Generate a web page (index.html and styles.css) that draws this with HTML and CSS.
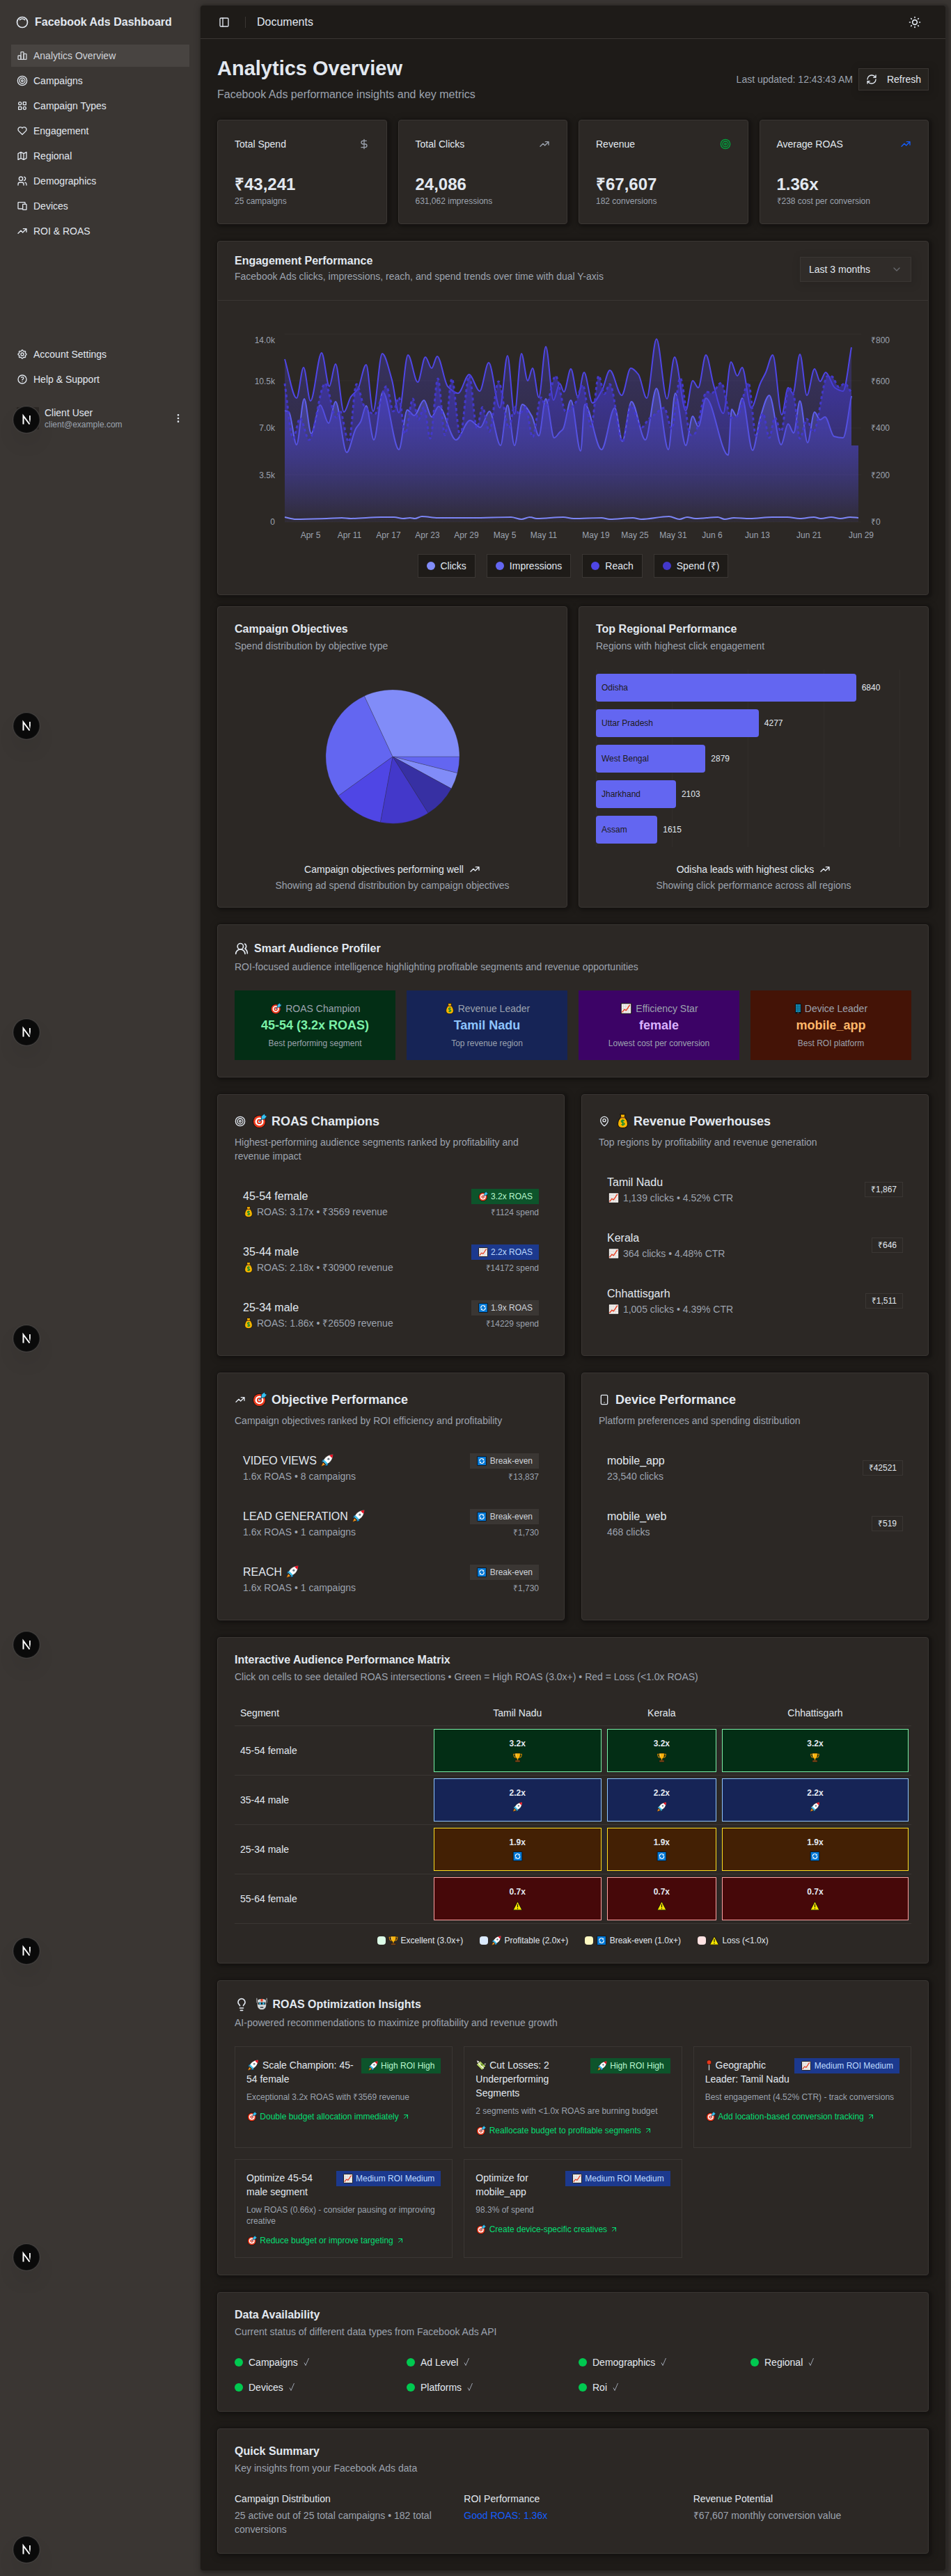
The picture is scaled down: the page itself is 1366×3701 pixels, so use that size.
FILE: index.html
```html
<!DOCTYPE html>
<html lang="en">
<head>
<meta charset="utf-8">
<meta name="viewport" content="width=device-width, initial-scale=1">
<title>Facebook Ads Dashboard</title>
<link rel="stylesheet" href="styles.css">
</head>
<body>
<svg class="sprite" aria-hidden="true">
  <symbol id="i-logo" viewBox="0 0 24 24"><path d="M5.636 5.636a9 9 0 1 0 12.728 12.728a9 9 0 0 0-12.728-12.728z"/><path d="M16.243 7.757a6 6 0 0 0-8.486 0"/></symbol>
  <symbol id="i-bars" viewBox="0 0 24 24"><path d="M3 13a1 1 0 0 1 1-1h4a1 1 0 0 1 1 1v6a1 1 0 0 1-1 1h-4a1 1 0 0 1-1-1z"/><path d="M15 9a1 1 0 0 1 1-1h4a1 1 0 0 1 1 1v10a1 1 0 0 1-1 1h-4a1 1 0 0 1-1-1z"/><path d="M9 5a1 1 0 0 1 1-1h4a1 1 0 0 1 1 1v14a1 1 0 0 1-1 1h-4a1 1 0 0 1-1-1z"/></symbol>
  <symbol id="i-target" viewBox="0 0 24 24"><circle cx="12" cy="12" r="10"/><circle cx="12" cy="12" r="6"/><circle cx="12" cy="12" r="2"/></symbol>
  <symbol id="i-grid" viewBox="0 0 24 24"><circle cx="7" cy="7" r="3"/><path d="M14 4h6v6h-6zM4 14h6v6H4z"/><circle cx="17" cy="17" r="3"/></symbol>
  <symbol id="i-heart" viewBox="0 0 24 24"><path d="M19.5 12.572l-7.5 7.428l-7.5-7.428a5 5 0 1 1 7.5-6.566a5 5 0 1 1 7.5 6.572"/></symbol>
  <symbol id="i-map" viewBox="0 0 24 24"><path d="M3 7l6-3l6 3l6-3v13l-6 3l-6-3l-6 3zM9 4v13M15 7v13"/></symbol>
  <symbol id="i-users" viewBox="0 0 24 24"><circle cx="9" cy="7" r="4"/><path d="M3 21v-2a4 4 0 0 1 4-4h4a4 4 0 0 1 4 4v2M16 3.13a4 4 0 0 1 0 7.75M21 21v-2a4 4 0 0 0-3-3.85"/></symbol>
  <symbol id="i-people" viewBox="0 0 24 24"><path d="M18 21a8 8 0 0 0-16 0"/><circle cx="10" cy="8" r="5"/><path d="M22 20c0-3.37-2-6.5-4-8a5 5 0 0 0-.45-8.3"/></symbol>
  <symbol id="i-devices" viewBox="0 0 24 24"><path d="M13 9a1 1 0 0 1 1-1h6a1 1 0 0 1 1 1v10a1 1 0 0 1-1 1h-6a1 1 0 0 1-1-1zM18 8V5a1 1 0 0 0-1-1H4a1 1 0 0 0-1 1v12a1 1 0 0 0 1 1h9"/></symbol>
  <symbol id="i-trend" viewBox="0 0 24 24"><path d="M3 17l6-6l4 4l8-8M14 7h7v7"/></symbol>
  <symbol id="i-gear" viewBox="0 0 24 24"><path d="M10.325 4.317c.426-1.756 2.924-1.756 3.35 0a1.724 1.724 0 0 0 2.573 1.066c1.543-.94 3.31.826 2.37 2.37a1.724 1.724 0 0 0 1.065 2.572c1.756.426 1.756 2.924 0 3.35a1.724 1.724 0 0 0-1.066 2.573c.94 1.543-.826 3.31-2.37 2.37a1.724 1.724 0 0 0-2.572 1.065c-.426 1.756-2.924 1.756-3.35 0a1.724 1.724 0 0 0-2.573-1.066c-1.543.94-3.31-.826-2.37-2.37a1.724 1.724 0 0 0-1.065-2.572c-1.756-.426-1.756-2.924 0-3.35a1.724 1.724 0 0 0 1.066-2.573c-.94-1.543.826-3.31 2.37-2.37c1 .608 2.296.07 2.572-1.065z"/><circle cx="12" cy="12" r="3"/></symbol>
  <symbol id="i-help" viewBox="0 0 24 24"><circle cx="12" cy="12" r="9"/><path d="M12 17v.01M12 13.5a1.5 1.5 0 0 1 1-1.5a2.6 2.6 0 1 0-3-4"/></symbol>
  <symbol id="i-dots" viewBox="0 0 24 24"><circle cx="12" cy="12" r="1"/><circle cx="12" cy="19" r="1"/><circle cx="12" cy="5" r="1"/></symbol>
  <symbol id="i-panel" viewBox="0 0 24 24"><rect x="3" y="3" width="18" height="18" rx="2"/><path d="M9 3v18"/></symbol>
  <symbol id="i-sun" viewBox="0 0 24 24"><circle cx="12" cy="12" r="4"/><path d="M12 3v1M12 20v1M3 12h1M20 12h1M18.36 5.64l-.7.7M6.34 17.66l-.7.7M5.64 5.64l.7.7M17.66 17.66l.7.7"/></symbol>
  <symbol id="i-refresh" viewBox="0 0 24 24"><path d="M3 12a9 9 0 0 1 9-9 9.75 9.75 0 0 1 6.74 2.74L21 8M21 3v5h-5M21 12a9 9 0 0 1-9 9 9.75 9.75 0 0 1-6.74-2.74L3 16M8 16H3v5"/></symbol>
  <symbol id="i-dollar" viewBox="0 0 24 24"><path d="M12 2v20M17 5H9.500a3.500 3.500 0 0 0 0 7h5a3.500 3.500 0 0 1 0 7H6"/></symbol>
  <symbol id="i-chevron" viewBox="0 0 24 24"><path d="m6 9 6 6 6-6"/></symbol>
  <symbol id="i-pin" viewBox="0 0 24 24"><path d="M20 10c0 5-5.500 10.200-7.400 11.800a1 1 0 0 1-1.200 0C9.500 20.200 4 15 4 10a8 8 0 0 1 16 0"/><circle cx="12" cy="10" r="3"/></symbol>
  <symbol id="i-phone" viewBox="0 0 24 24"><rect x="5" y="2" width="14" height="20" rx="2"/><path d="M12 18h.01"/></symbol>
  <symbol id="i-bulb" viewBox="0 0 24 24"><path d="M15 14c.2-1 .7-1.700 1.500-2.500 1-.9 1.500-2.200 1.500-3.500A6 6 0 0 0 6 8c0 1 .2 2.200 1.500 3.500.7.7 1.300 1.500 1.500 2.500M9 18h6M10 22h4"/></symbol>
  <symbol id="i-out" viewBox="0 0 24 24"><path d="M7 7h10v10M7 17 17 7"/></symbol>
  <symbol id="i-check" viewBox="0 0 12 14"><path d="M1 7.500 3 11.500 7.500 1"/></symbol>

  <symbol id="e-target" viewBox="0 0 24 24"><circle cx="11.500" cy="13" r="10.900" fill="#15100e"/><circle cx="11.500" cy="13" r="9.800" fill="#e8391c"/><circle cx="11.500" cy="13" r="6.800" fill="#fff"/><circle cx="11.500" cy="13" r="4.200" fill="#e8391c"/><circle cx="11.500" cy="13" r="1.800" fill="#fff"/><path d="M11 13.500 17 7" stroke="#0b6aa8" stroke-width="1.600"/><path d="M14.500 9.500 15 4l5-4 1 3 3 1-4 5z" fill="#35c1f1" stroke="#12202a" stroke-width=".8"/></symbol>
  <symbol id="e-bag" viewBox="3 0 18 24"><path d="M8 1h8l-1 5c3.500 3 5 7 5 11 0 4-3 6.500-8 6.500S4 21 4 17c0-4 1.500-8 5-11z" fill="#f8b500" stroke="#15100e" stroke-width="1.200"/><path d="M8.500 6.500h7" stroke="#8a4b16" stroke-width="2"/><path d="M14.800 11.500c-3-1.500-5.300-.3-5.300 1.200 0 2.600 5.300 1.400 5.300 4 0 1.700-2.800 2.400-5.300 1M12 9.500v10.500" fill="none" stroke="#0f8a33" stroke-width="1.600"/></symbol>
  <symbol id="e-chart" viewBox="0 0 24 24"><rect x="1" y="1" width="22" height="22" rx="1" fill="#f3f1ef" stroke="#15100e" stroke-width="1.600"/><path d="M6 2v20M11 2v20M16 2v20M2 7h20M2 12h20M2 17h20" stroke="#cfcac6" stroke-width=".8"/><path d="m3 20 5-6 4 2 8-12" fill="none" stroke="#e8391c" stroke-width="2"/></symbol>
  <symbol id="e-phone" viewBox="5 0 14 24"><rect x="5.500" y="1" width="13" height="22" rx="1.500" fill="#0c1216"/><rect x="7" y="3" width="10" height="16.500" fill="#1598c4"/><path d="M10.300 3v16.500M13.700 3v16.500M7 7h10M7 11h10M7 15h10" stroke="#0b4d69" stroke-width="1"/><path d="M10.500 21.200h3" stroke="#8b9499" stroke-width="1"/></symbol>
  <symbol id="e-loop" viewBox="0 0 24 24"><rect x="1" y="1" width="22" height="22" rx="1" fill="#0078d7" stroke="#101820" stroke-width="1.800"/><path d="M7 13a5 5 0 0 1 8.500-5M17 11a5 5 0 0 1-8.500 5" fill="none" stroke="#fff" stroke-width="1.900"/><path d="M17.500 5.500V10H13zM6.500 18.500V14H11z" fill="#fff"/></symbol>
  <symbol id="e-rocket" viewBox="0 0 24 24"><path d="M8 9 3 11l-2 5 6-1M15 16l-2 6-5 1 1-6" fill="#1b9be0" stroke="#15100e" stroke-width=".8"/><path d="m4 16 4.500 4.500L.5 23.500z" fill="#f7941d" stroke="#15100e" stroke-width=".6"/><path d="M4 14C7 6 13 1.500 23.300.7 22.500 11 18 17 10 20z" fill="#fff" stroke="#15100e" stroke-width=".8"/><path d="M16 2.500c2.500-1 4.600-1.400 7-1.500-.1 2.400-.6 4.500-1.500 7z" fill="#e81123"/><path d="m4.500 14 5.500 5.500 3-1.500L6 11z" fill="#35c1f1"/><circle cx="14.500" cy="9.500" r="2.100" fill="#6d7d8b"/></symbol>
  <symbol id="e-trophy" viewBox="0 0 24 24"><path d="M6 4H2c0 5 1.500 8 5.500 8.500M18 4h4c0 5-1.500 8-5.500 8.500" fill="none" stroke="#d98a00" stroke-width="1.800"/><path d="M5.500 1.500h13c0 7-1 12-5 13.500v4h-3v-4c-4-1.500-5-6.500-5-13.500z" fill="#fbb40c" stroke="#15100e" stroke-width=".8"/><path d="M8 3v7" stroke="#ffe08a" stroke-width="1.500"/><path d="M6 19h12v4H6z" fill="#8a4b16" stroke="#15100e" stroke-width=".8"/></symbol>
  <symbol id="e-warn" viewBox="0 0 24 24"><path d="M12 1.500 23 22.500H1z" fill="#f7e600" stroke="#15100e" stroke-width="1.500"/><path d="M12 8v8M12 18v2.200" stroke="#15100e" stroke-width="2"/></symbol>
  <symbol id="e-robot" viewBox="0 0 24 24"><path d="M2.500 1v9M21.500 1v9" stroke="#b5b9bc" stroke-width="1.500"/><path d="M3.500 5c3-4 14-4 17 0l.5 8c0 7-4 10.500-9 10.500S3 20 3 13z" fill="#d3d6d8" stroke="#15100e" stroke-width="1"/><path d="M10 2.500h4v5h-4z" fill="#e8391c"/><path d="M5 9h14v4.500H5z" fill="#1a2126"/><path d="M7 9.500h3.500v3.500H7zM13.500 9.500H17v3.500h-3.500z" fill="#35c1f1"/><path d="M9 17.500h6v2.500H9z" fill="#4b5257"/></symbol>
  <symbol id="e-cash" viewBox="0 0 24 24"><path d="M2 1l5 2 4 4-6 3zM21 13l-3-4 5-2z" fill="#f3f3f3" stroke="#15100e" stroke-width="1"/><path d="m10 3 12 11-8 9L2 11z" fill="#b7d36a" stroke="#15100e" stroke-width="1.200"/><path d="m6.500 7.500 11 12" stroke="#f5f5e6" stroke-width="2.600"/><circle cx="14" cy="11" r="2.600" fill="#6f9a2c"/></symbol>
  <symbol id="e-pushpin" viewBox="6 0 12 24"><path d="M12 10v13" stroke="#c9cdd0" stroke-width="2"/><circle cx="12" cy="6" r="5" fill="#e8391c" stroke="#15100e" stroke-width="1"/></symbol>
</svg>

<div class="page">
  <aside class="sidebar">
    <a class="brand" href="#"><svg class="icon icon-lg"><use href="#i-logo"/></svg>Facebook Ads Dashboard</a>
    <nav class="nav" aria-label="Main">
      <a class="nav-item active" href="#"><svg class="icon"><use href="#i-bars"/></svg>Analytics Overview</a>
      <a class="nav-item" href="#"><svg class="icon"><use href="#i-target"/></svg>Campaigns</a>
      <a class="nav-item" href="#"><svg class="icon"><use href="#i-grid"/></svg>Campaign Types</a>
      <a class="nav-item" href="#"><svg class="icon"><use href="#i-heart"/></svg>Engagement</a>
      <a class="nav-item" href="#"><svg class="icon"><use href="#i-map"/></svg>Regional</a>
      <a class="nav-item" href="#"><svg class="icon"><use href="#i-users"/></svg>Demographics</a>
      <a class="nav-item" href="#"><svg class="icon"><use href="#i-devices"/></svg>Devices</a>
      <a class="nav-item" href="#"><svg class="icon"><use href="#i-trend"/></svg>ROI &amp; ROAS</a>
    </nav>
    <nav class="nav nav-secondary" aria-label="Support">
      <a class="nav-item" href="#"><svg class="icon"><use href="#i-gear"/></svg>Account Settings</a>
      <a class="nav-item" href="#"><svg class="icon"><use href="#i-help"/></svg>Help &amp; Support</a>
    </nav>
    <button class="user" type="button">
      <span class="avatar"></span>
      <span class="user-text"><span class="user-name">Client User</span><span class="user-mail">client@example.com</span></span>
      <svg class="icon"><use href="#i-dots"/></svg>
    </button>
  </aside>

  <main class="panel">
    <header class="topbar">
      <button class="icon-button" type="button" aria-label="Toggle sidebar"><svg class="icon"><use href="#i-panel"/></svg></button>
      <span class="divider"></span>
      <span class="topbar-title">Documents</span>
      <button class="icon-button theme" type="button" aria-label="Toggle theme"><svg class="icon icon-lg"><use href="#i-sun"/></svg></button>
    </header>

    <div class="content">
      <section class="page-head">
        <div>
          <h1>Analytics Overview</h1>
          <p class="lead">Facebook Ads performance insights and key metrics</p>
        </div>
        <div class="page-actions">
          <span>Last updated: 12:43:43 AM</span>
          <button class="refresh" type="button"><svg class="icon"><use href="#i-refresh"/></svg>Refresh</button>
        </div>
      </section>

      <section class="stats">
        <article class="card stat"><div class="stat-head"><h2>Total Spend</h2><svg class="icon muted"><use href="#i-dollar"/></svg></div><p class="value">₹43,241</p><p class="note">25 campaigns</p></article>
        <article class="card stat"><div class="stat-head"><h2>Total Clicks</h2><svg class="icon muted"><use href="#i-trend"/></svg></div><p class="value">24,086</p><p class="note">631,062 impressions</p></article>
        <article class="card stat"><div class="stat-head"><h2>Revenue</h2><svg class="icon green"><use href="#i-target"/></svg></div><p class="value">₹67,607</p><p class="note">182 conversions</p></article>
        <article class="card stat"><div class="stat-head"><h2>Average ROAS</h2><svg class="icon blue"><use href="#i-trend"/></svg></div><p class="value">1.36x</p><p class="note">₹238 cost per conversion</p></article>
      </section>

      <div class="charts">
        <section class="card engagement">
          <div class="engagement-head">
            <div>
              <h2 class="title">Engagement Performance</h2>
              <p class="desc">Facebook Ads clicks, impressions, reach, and spend trends over time with dual Y-axis</p>
            </div>
            <div class="select"><select aria-label="Time range"><option>Last 3 months</option><option>Last 30 days</option><option>Last 7 days</option></select><svg class="icon"><use href="#i-chevron"/></svg></div>
          </div>
          <div class="engagement-body">
            <svg class="area-chart" viewBox="0 0 972 324" role="img" aria-label="Engagement over time">
              <defs>
                <linearGradient id="g-reach" gradientUnits="userSpaceOnUse" x1="0" y1="0" x2="0" y2="270"><stop offset="0" stop-color="#4f46e5" stop-opacity=".34"/><stop offset="1" stop-color="#4f46e5" stop-opacity=".02"/></linearGradient>
                <linearGradient id="g-spend" gradientUnits="userSpaceOnUse" x1="0" y1="60" x2="0" y2="270"><stop offset="0" stop-color="#4338ca" stop-opacity=".6"/><stop offset="1" stop-color="#4338ca" stop-opacity=".03"/></linearGradient>
                <linearGradient id="g-impressions" gradientUnits="userSpaceOnUse" x1="0" y1="78" x2="0" y2="270"><stop offset="0" stop-color="#6366f1" stop-opacity=".46"/><stop offset="1" stop-color="#6366f1" stop-opacity=".03"/></linearGradient>
              </defs>
              <g class="axis">
                <g text-anchor="end"><text x="58" y="37">14.0k</text><text x="58" y="96">10.5k</text><text x="58" y="163">7.0k</text><text x="58" y="231">3.5k</text><text x="58" y="298">0</text></g>
                <g><text x="914" y="37">₹800</text><text x="914" y="96">₹600</text><text x="914" y="163">₹400</text><text x="914" y="231">₹200</text><text x="914" y="298">₹0</text></g>
                <g text-anchor="middle"><text x="109" y="317">Apr 5</text><text x="165" y="317">Apr 11</text><text x="221" y="317">Apr 17</text><text x="277" y="317">Apr 23</text><text x="333" y="317">Apr 29</text><text x="388" y="317">May 5</text><text x="444" y="317">May 11</text><text x="519" y="317">May 19</text><text x="575" y="317">May 25</text><text x="630" y="317">May 31</text><text x="686" y="317">Jun 6</text><text x="751" y="317">Jun 13</text><text x="825" y="317">Jun 21</text><text x="900" y="317">Jun 29</text></g>
              </g>
              <g id="plot" transform="translate(72 24)"><path class="gridlines" d="M0 0H828M0 67H828M0 135H828M0 202H828M0 270H828"/></g>
            </svg>
            <ul class="legend">
              <li><i class="dot c1"></i>Clicks</li>
              <li><i class="dot c2"></i>Impressions</li>
              <li><i class="dot c3"></i>Reach</li>
              <li><i class="dot c4"></i>Spend (₹)</li>
            </ul>
          </div>
        </section>

        <section class="card chart-card">
          <h2 class="title">Campaign Objectives</h2>
          <p class="desc">Spend distribution by objective type</p>
          <div class="chart-area">
            <svg class="pie" viewBox="-125 -125 250 250" role="img" aria-label="Spend by objective">
              <path fill="#6366f1" d="M0 0H96A96 96 0 0 1 93 23.700z"/>
              <path fill="#818cf8" d="M0 0 93 23.700A96 96 0 0 1 84.300 46z"/>
              <path fill="#3730a3" d="M0 0 84.300 46A96 96 0 0 1 51 81.300z"/>
              <path fill="#4338ca" d="M0 0 51 81.300A96 96 0 0 1-17.700 94.400z"/>
              <path fill="#4f46e5" d="M0 0-17.700 94.400A96 96 0 0 1-77.900 56.200z"/>
              <path fill="#6366f1" d="M0 0-77.900 56.200A96 96 0 0 1-40.600-87z"/>
              <path fill="#818cf8" d="M0 0-40.600-87A96 96 0 0 1 96 0z"/>
            </svg>
          </div>
          <div class="chart-foot"><p>Campaign objectives performing well <svg class="icon"><use href="#i-trend"/></svg></p><p class="foot-note">Showing ad spend distribution by campaign objectives</p></div>
        </section>

        <section class="card chart-card">
          <h2 class="title">Top Regional Performance</h2>
          <p class="desc">Regions with highest click engagement</p>
          <div class="chart-area bars">
            <div class="bar-row"><div class="bar" style="width:85.5%">Odisha</div><span>6840</span></div>
            <div class="bar-row"><div class="bar" style="width:53.5%">Uttar Pradesh</div><span>4277</span></div>
            <div class="bar-row"><div class="bar" style="width:36%">West Bengal</div><span>2879</span></div>
            <div class="bar-row"><div class="bar" style="width:26.3%">Jharkhand</div><span>2103</span></div>
            <div class="bar-row"><div class="bar" style="width:20.2%">Assam</div><span>1615</span></div>
          </div>
          <div class="chart-foot"><p>Odisha leads with highest clicks <svg class="icon"><use href="#i-trend"/></svg></p><p class="foot-note">Showing click performance across all regions</p></div>
        </section>
      </div>

      <section class="card">
        <h2 class="title with-icon"><svg class="icon icon-lg"><use href="#i-people"/></svg>Smart Audience Profiler</h2>
        <p class="desc">ROI-focused audience intelligence highlighting profitable segments and revenue opportunities</p>
        <div class="tiles">
          <div class="tile t-green"><p class="tile-label"><svg class="emoji"><use href="#e-target"/></svg> ROAS Champion</p><p class="tile-value">45-54 (3.2x ROAS)</p><p class="tile-note">Best performing segment</p></div>
          <div class="tile t-blue"><p class="tile-label"><svg class="emoji slim"><use href="#e-bag"/></svg> Revenue Leader</p><p class="tile-value">Tamil Nadu</p><p class="tile-note">Top revenue region</p></div>
          <div class="tile t-purple"><p class="tile-label"><svg class="emoji"><use href="#e-chart"/></svg> Efficiency Star</p><p class="tile-value">female</p><p class="tile-note">Lowest cost per conversion</p></div>
          <div class="tile t-orange"><p class="tile-label"><svg class="emoji thin"><use href="#e-phone"/></svg> Device Leader</p><p class="tile-value">mobile_app</p><p class="tile-note">Best ROI platform</p></div>
        </div>
      </section>

      <div class="pair">
        <section class="card">
          <h2 class="title big"><svg class="icon"><use href="#i-target"/></svg><span><svg class="emoji emoji-18"><use href="#e-target"/></svg> ROAS Champions</span></h2>
          <p class="desc">Highest-performing audience segments ranked by profitability and revenue impact</p>
          <ul class="rows">
            <li><div><p class="name">45-54 female</p><p class="meta"><svg class="emoji slim"><use href="#e-bag"/></svg> ROAS: 3.17x • ₹3569 revenue</p></div><div class="side"><span class="badge b-green"><svg class="emoji emoji-12"><use href="#e-target"/></svg> 3.2x ROAS</span><p class="spend">₹1124 spend</p></div></li>
            <li><div><p class="name">35-44 male</p><p class="meta"><svg class="emoji slim"><use href="#e-bag"/></svg> ROAS: 2.18x • ₹30900 revenue</p></div><div class="side"><span class="badge b-blue"><svg class="emoji emoji-12"><use href="#e-chart"/></svg> 2.2x ROAS</span><p class="spend">₹14172 spend</p></div></li>
            <li><div><p class="name">25-34 male</p><p class="meta"><svg class="emoji slim"><use href="#e-bag"/></svg> ROAS: 1.86x • ₹26509 revenue</p></div><div class="side"><span class="badge"><svg class="emoji emoji-12"><use href="#e-loop"/></svg> 1.9x ROAS</span><p class="spend">₹14229 spend</p></div></li>
          </ul>
        </section>
        <section class="card">
          <h2 class="title big"><svg class="icon"><use href="#i-pin"/></svg><span><svg class="emoji emoji-18 slim"><use href="#e-bag"/></svg> Revenue Powerhouses</span></h2>
          <p class="desc">Top regions by profitability and revenue generation</p>
          <ul class="rows">
            <li><div><p class="name">Tamil Nadu</p><p class="meta"><svg class="emoji"><use href="#e-chart"/></svg> 1,139 clicks • 4.52% CTR</p></div><span class="badge outline">₹1,867</span></li>
            <li><div><p class="name">Kerala</p><p class="meta"><svg class="emoji"><use href="#e-chart"/></svg> 364 clicks • 4.48% CTR</p></div><span class="badge outline">₹646</span></li>
            <li><div><p class="name">Chhattisgarh</p><p class="meta"><svg class="emoji"><use href="#e-chart"/></svg> 1,005 clicks • 4.39% CTR</p></div><span class="badge outline">₹1,511</span></li>
          </ul>
        </section>
        <section class="card">
          <h2 class="title big"><svg class="icon"><use href="#i-trend"/></svg><span><svg class="emoji emoji-18"><use href="#e-target"/></svg> Objective Performance</span></h2>
          <p class="desc">Campaign objectives ranked by ROI efficiency and profitability</p>
          <ul class="rows">
            <li><div><p class="name">VIDEO VIEWS <svg class="emoji emoji-16"><use href="#e-rocket"/></svg></p><p class="meta">1.6x ROAS • 8 campaigns</p></div><div class="side"><span class="badge"><svg class="emoji emoji-12"><use href="#e-loop"/></svg> Break-even</span><p class="spend">₹13,837</p></div></li>
            <li><div><p class="name">LEAD GENERATION <svg class="emoji emoji-16"><use href="#e-rocket"/></svg></p><p class="meta">1.6x ROAS • 1 campaigns</p></div><div class="side"><span class="badge"><svg class="emoji emoji-12"><use href="#e-loop"/></svg> Break-even</span><p class="spend">₹1,730</p></div></li>
            <li><div><p class="name">REACH <svg class="emoji emoji-16"><use href="#e-rocket"/></svg></p><p class="meta">1.6x ROAS • 1 campaigns</p></div><div class="side"><span class="badge"><svg class="emoji emoji-12"><use href="#e-loop"/></svg> Break-even</span><p class="spend">₹1,730</p></div></li>
          </ul>
        </section>
        <section class="card">
          <h2 class="title big"><svg class="icon"><use href="#i-phone"/></svg>Device Performance</h2>
          <p class="desc">Platform preferences and spending distribution</p>
          <ul class="rows">
            <li><div><p class="name">mobile_app</p><p class="meta">23,540 clicks</p></div><span class="badge outline">₹42521</span></li>
            <li><div><p class="name">mobile_web</p><p class="meta">468 clicks</p></div><span class="badge outline">₹519</span></li>
          </ul>
        </section>
      </div>

      <section class="card">
        <h2 class="title">Interactive Audience Performance Matrix</h2>
        <p class="desc">Click on cells to see detailed ROAS intersections • Green = High ROAS (3.0x+) • Red = Loss (&lt;1.0x ROAS)</p>
        <table class="matrix">
          <colgroup><col class="col-a"><col class="col-b"><col class="col-c"><col class="col-d"></colgroup>
          <thead><tr><th scope="col">Segment</th><th scope="col">Tamil Nadu</th><th scope="col">Kerala</th><th scope="col">Chhattisgarh</th></tr></thead>
          <tbody>
            <tr class="m-green"><th scope="row">45-54 female</th><td><button type="button">3.2x<svg class="emoji"><use href="#e-trophy"/></svg></button></td><td><button type="button">3.2x<svg class="emoji"><use href="#e-trophy"/></svg></button></td><td><button type="button">3.2x<svg class="emoji"><use href="#e-trophy"/></svg></button></td></tr>
            <tr class="m-blue"><th scope="row">35-44 male</th><td><button type="button">2.2x<svg class="emoji"><use href="#e-rocket"/></svg></button></td><td><button type="button">2.2x<svg class="emoji"><use href="#e-rocket"/></svg></button></td><td><button type="button">2.2x<svg class="emoji"><use href="#e-rocket"/></svg></button></td></tr>
            <tr class="m-yellow"><th scope="row">25-34 male</th><td><button type="button">1.9x<svg class="emoji"><use href="#e-loop"/></svg></button></td><td><button type="button">1.9x<svg class="emoji"><use href="#e-loop"/></svg></button></td><td><button type="button">1.9x<svg class="emoji"><use href="#e-loop"/></svg></button></td></tr>
            <tr class="m-red"><th scope="row">55-64 female</th><td><button type="button">0.7x<svg class="emoji"><use href="#e-warn"/></svg></button></td><td><button type="button">0.7x<svg class="emoji"><use href="#e-warn"/></svg></button></td><td><button type="button">0.7x<svg class="emoji"><use href="#e-warn"/></svg></button></td></tr>
          </tbody>
        </table>
        <ul class="key">
          <li><i class="swatch s-green"></i><span><svg class="emoji emoji-12 slim"><use href="#e-trophy"/></svg> Excellent (3.0x+)</span></li>
          <li><i class="swatch s-blue"></i><span><svg class="emoji emoji-12"><use href="#e-rocket"/></svg> Profitable (2.0x+)</span></li>
          <li><i class="swatch s-yellow"></i><span><svg class="emoji emoji-12"><use href="#e-loop"/></svg> Break-even (1.0x+)</span></li>
          <li><i class="swatch s-red"></i><span><svg class="emoji emoji-12"><use href="#e-warn"/></svg> Loss (&lt;1.0x)</span></li>
        </ul>
      </section>

      <section class="card">
        <h2 class="title with-icon"><svg class="icon icon-lg"><use href="#i-bulb"/></svg><span><svg class="emoji emoji-16"><use href="#e-robot"/></svg> ROAS Optimization Insights</span></h2>
        <p class="desc">AI-powered recommendations to maximize profitability and revenue growth</p>
        <div class="insights">
          <article class="insight"><div class="insight-head"><h3><svg class="emoji"><use href="#e-rocket"/></svg> Scale Champion: 45-54 female</h3><span class="badge b-green"><svg class="emoji emoji-12"><use href="#e-rocket"/></svg> High ROI High</span></div><p>Exceptional 3.2x ROAS with ₹3569 revenue</p><a href="#"><svg class="emoji emoji-12"><use href="#e-target"/></svg> Double budget allocation immediately<svg class="icon icon-sm"><use href="#i-out"/></svg></a></article>
          <article class="insight"><div class="insight-head"><h3><svg class="emoji slim"><use href="#e-cash"/></svg> Cut Losses: 2 Underperforming Segments</h3><span class="badge b-green"><svg class="emoji emoji-12"><use href="#e-rocket"/></svg> High ROI High</span></div><p>2 segments with &lt;1.0x ROAS are burning budget</p><a href="#"><svg class="emoji emoji-12"><use href="#e-target"/></svg> Reallocate budget to profitable segments<svg class="icon icon-sm"><use href="#i-out"/></svg></a></article>
          <article class="insight"><div class="insight-head"><h3><svg class="emoji thin"><use href="#e-pushpin"/></svg> Geographic Leader: Tamil Nadu</h3><span class="badge b-blue"><svg class="emoji emoji-12"><use href="#e-chart"/></svg> Medium ROI Medium</span></div><p>Best engagement (4.52% CTR) - track conversions</p><a href="#"><svg class="emoji emoji-12"><use href="#e-target"/></svg> Add location-based conversion tracking<svg class="icon icon-sm"><use href="#i-out"/></svg></a></article>
          <article class="insight"><div class="insight-head"><h3>Optimize 45-54 male segment</h3><span class="badge b-blue"><svg class="emoji emoji-12"><use href="#e-chart"/></svg> Medium ROI Medium</span></div><p>Low ROAS (0.66x) - consider pausing or improving creative</p><a href="#"><svg class="emoji emoji-12"><use href="#e-target"/></svg> Reduce budget or improve targeting<svg class="icon icon-sm"><use href="#i-out"/></svg></a></article>
          <article class="insight"><div class="insight-head"><h3>Optimize for mobile_app</h3><span class="badge b-blue"><svg class="emoji emoji-12"><use href="#e-chart"/></svg> Medium ROI Medium</span></div><p>98.3% of spend</p><a href="#"><svg class="emoji emoji-12"><use href="#e-target"/></svg> Create device-specific creatives<svg class="icon icon-sm"><use href="#i-out"/></svg></a></article>
        </div>
      </section>

      <section class="card">
        <h2 class="title">Data Availability</h2>
        <p class="desc">Current status of different data types from Facebook Ads API</p>
        <ul class="status">
          <li><i class="dot ok"></i>Campaigns<svg class="check"><use href="#i-check"/></svg></li>
          <li><i class="dot ok"></i>Ad Level<svg class="check"><use href="#i-check"/></svg></li>
          <li><i class="dot ok"></i>Demographics<svg class="check"><use href="#i-check"/></svg></li>
          <li><i class="dot ok"></i>Regional<svg class="check"><use href="#i-check"/></svg></li>
          <li><i class="dot ok"></i>Devices<svg class="check"><use href="#i-check"/></svg></li>
          <li><i class="dot ok"></i>Platforms<svg class="check"><use href="#i-check"/></svg></li>
          <li><i class="dot ok"></i>Roi<svg class="check"><use href="#i-check"/></svg></li>
        </ul>
      </section>

      <section class="card">
        <h2 class="title">Quick Summary</h2>
        <p class="desc">Key insights from your Facebook Ads data</p>
        <div class="summary">
          <div><h3>Campaign Distribution</h3><p>25 active out of 25 total campaigns • 182 total conversions</p></div>
          <div><h3>ROI Performance</h3><p class="link-blue">Good ROAS: 1.36x</p></div>
          <div><h3>Revenue Potential</h3><p>₹67,607 monthly conversion value</p></div>
        </div>
      </section>
    </div>
  </main>

  <div class="dev-badges" id="dev-badges"></div>
</div>
<template id="dev-badge"><button class="dev-badge" type="button" aria-label="Open dev tools"><svg viewBox="0 0 36 36" width="36" height="36"><defs><linearGradient id="nfade" x1="0" y1="0" x2="0" y2="1"><stop offset=".5" stop-color="#fff"/><stop offset="1" stop-color="#fff" stop-opacity="0"/></linearGradient></defs><path d="M13.500 24.500v-12l9 12" fill="none" stroke="#fff" stroke-width="2"/><path d="M22 12h1.800v11H22z" fill="url(#nfade)"/></svg></button></template>
<script src="chart.js"></script>
</body>
</html>
```
FILE: styles.css
```css
* { box-sizing: border-box; margin: 0; padding: 0; }
body { background: #3a3633; color: #e2e8f0; font: 14px/20px "Liberation Sans", Arial, sans-serif; }
ul { list-style: none; }
a { color: inherit; text-decoration: none; }
button, select { font: inherit; color: inherit; background: none; border: 0; border-radius: 0; cursor: pointer; }
h1, h2, h3, th { font-weight: 400; font-size: inherit; }
.sprite { position: absolute; width: 0; height: 0; }

.icon { width: 16px; height: 16px; flex: none; fill: none; stroke: currentColor; stroke-width: 2; stroke-linecap: round; stroke-linejoin: round; }
.icon-lg { width: 20px; height: 20px; }
.icon-sm { width: 12px; height: 12px; margin-left: 4px; }
.muted { color: #9ca3af; }
.green { color: #00a63e; }
.blue { color: #155dfc; }

/* Emoji artwork, sized to the text beside it */
.emoji { width: 19px; height: 16px; vertical-align: -3px; }
.emoji.slim { width: 16px; }
.emoji.thin { width: 11px; }
.emoji-12 { width: 16px; height: 14px; vertical-align: -3px; }
.emoji-12.slim { width: 14px; }
.emoji-16 { width: 22px; height: 18px; vertical-align: -3px; }
.emoji-18 { width: 24px; height: 21px; vertical-align: -4px; }
.emoji-18.slim { width: 21px; }

.page { position: relative; display: flex; }

/* Sidebar */
.sidebar { width: 288px; flex: none; padding: 16px; }
.brand { display: flex; align-items: center; gap: 8px; height: 32px; padding: 0 6px; font-size: 16px; font-weight: 700; }
.nav { display: flex; flex-direction: column; gap: 4px; margin-top: 16px; }
.nav-secondary { margin-top: 145px; }
.nav-item { display: flex; align-items: center; gap: 8px; height: 32px; padding: 0 8px; }
.nav-item.active { background: #484441; color: #d1d5db; }
.user { display: flex; align-items: center; gap: 8px; width: 100%; height: 48px; margin-top: 16px; padding: 0 8px; text-align: left; }
.avatar { width: 32px; height: 32px; background: #2c2825; }
.user-text { flex: 1; display: flex; flex-direction: column; }
.user-name { line-height: 17px; }
.user-mail { font-size: 12px; line-height: 16px; color: #9ca3af; }

/* Main panel */
.panel { flex: 1; min-width: 0; margin: 8px 8px 8px 0; background: #1e1b18; border-radius: 4px; box-shadow: 2px 2px 10px 4px rgba(0, 0, 0, .18), 2px 1px 2px 3px rgba(0, 0, 0, .12); }
.topbar { display: flex; align-items: center; height: 48px; padding: 0 16px 0 20px; border-bottom: 1px solid #3a3633; }
.icon-button { display: flex; align-items: center; justify-content: center; width: 28px; height: 28px; }
.icon-button.theme { width: 40px; margin-left: auto; margin-right: 8px; }
.divider { width: 1px; height: 16px; margin: 0 16px; background: #3a3633; }
.topbar-title { font-size: 16px; }
.content { display: flex; flex-direction: column; gap: 24px; padding: 24px; }

.page-head { display: flex; align-items: center; justify-content: space-between; }
h1 { font-size: 29px; line-height: 36px; font-weight: 700; }
.lead { margin-top: 8px; font-size: 16px; line-height: 24px; color: #9ca3af; }
.page-actions { display: flex; align-items: center; gap: 8px; color: #9ca3af; }
.refresh { display: flex; align-items: center; gap: 14px; height: 32px; padding: 0 10px; color: #e2e8f0; background: #26231f; border: 1px solid #3a3633; box-shadow: 2px 2px 10px 4px rgba(0, 0, 0, .1); }

/* Cards */
.card { padding: 24px; background: #2c2825; border: 1px solid #3a3633; border-radius: 4px; box-shadow: 2px 2px 10px 4px rgba(0, 0, 0, .18), 2px 1px 2px 3px rgba(0, 0, 0, .12); }
.title { display: flex; align-items: center; font-size: 16px; line-height: 16px; font-weight: 700; }
.title.with-icon { gap: 8px; height: 20px; line-height: 20px; }
.title.big { gap: 8px; font-size: 18px; line-height: 28px; height: 28px; }
.desc { margin-top: 6px; color: #9ca3af; }

.stats { display: grid; grid-template-columns: repeat(4, 1fr); gap: 16px; }
.stat-head { display: flex; align-items: center; justify-content: space-between; }
.value { margin-top: 32px; font-size: 24px; line-height: 32px; font-weight: 700; }
.note { font-size: 12px; line-height: 16px; color: #9ca3af; }

.charts { display: grid; grid-template-columns: 1fr 1fr; gap: 16px; }
.engagement { grid-column: 1 / -1; padding: 0; }
.engagement-head { display: flex; align-items: center; justify-content: space-between; padding: 20px 24px 24px; border-bottom: 1px solid #3a3633; }
.engagement-head .desc { margin-top: 4px; }
.engagement-body { padding: 24px; }
.select { display: grid; align-items: center; width: 160px; box-shadow: 2px 2px 10px 4px rgba(0, 0, 0, .08); }
.select > * { grid-area: 1 / 1; }
.select select { appearance: none; width: 100%; height: 36px; padding: 0 12px; background: #302c29; border: 1px solid #3a3633; }
.select .icon { justify-self: end; margin-right: 13px; color: #9ca3af; opacity: .5; pointer-events: none; }

.area-chart { display: block; width: 100%; height: auto; }
.axis { font-size: 12px; fill: #9ca3af; }
.gridlines { fill: none; stroke: #3a3633; stroke-opacity: .5; }
.line { fill: none; stroke-width: 2; }
.line-clicks { stroke: #818cf8; }
.line-impressions { stroke: #6366f1; }
.line-reach { stroke: #4f46e5; }
.line-spend { stroke: #4338ca; stroke-width: 3; stroke-dasharray: 4 4; }

.legend { display: flex; justify-content: center; gap: 16px; margin-top: 16px; }
.legend li { display: flex; align-items: center; gap: 8px; padding: 6px 12px; background: #1e1b18; border: 1px solid #3a3633; }
.dot { width: 12px; height: 12px; border-radius: 50%; }
.c1 { background: #818cf8; }
.c2 { background: #6366f1; }
.c3 { background: #4f46e5; }
.c4 { background: #4338ca; }
.ok { background: #00c950; }

.chart-area { height: 255px; margin-top: 24px; }
.pie { display: block; width: 250px; height: 250px; margin: 0 auto; }
.pie path { stroke: #2c2825; stroke-opacity: .25; stroke-width: 1; }
.bars { display: flex; flex-direction: column; padding-right: 16px; background: repeating-linear-gradient(90deg, #312d2a 0 1px, transparent 1px 109px) content-box; }
.bar-row { display: flex; align-items: center; gap: 8px; height: 51px; font-size: 12px; }
.bar { height: 40px; padding-left: 8px; line-height: 40px; color: #1e1b18; white-space: nowrap; background: #6366f1; border-radius: 4px; }
.chart-foot { display: flex; flex-direction: column; align-items: center; gap: 8px; margin-top: 24px; line-height: 14px; }
.chart-foot p { display: flex; align-items: center; gap: 8px; }
.foot-note { color: #9ca3af; }

.tiles { display: grid; grid-template-columns: repeat(4, 1fr); gap: 16px; margin-top: 24px; }
.tile { padding: 16px; text-align: center; color: #9ca3af; }
.tile-value { font-size: 18px; line-height: 28px; font-weight: 700; }
.tile-note { margin-top: 4px; font-size: 12px; line-height: 16px; }
.t-green { background: #032e15; }
.t-green .tile-value { color: #7bf1a8; }
.t-blue { background: #162456; }
.t-blue .tile-value { color: #8ec5ff; }
.t-purple { background: #3c0366; }
.t-purple .tile-value { color: #dab2ff; }
.t-orange { background: #441306; }
.t-orange .tile-value { color: #ffb86a; }

.pair { display: grid; grid-template-columns: 1fr 1fr; gap: 24px; }
.rows { display: flex; flex-direction: column; gap: 12px; margin-top: 24px; }
.rows li { display: flex; align-items: center; justify-content: space-between; height: 68px; padding: 12px; }
.name { font-size: 16px; line-height: 24px; }
.meta { color: #9ca3af; }
.side { display: flex; flex-direction: column; align-items: flex-end; gap: 4px; }
.spend { font-size: 12px; line-height: 16px; color: #9ca3af; }
.badge { display: block; flex: none; height: 22px; padding: 2px 8px; font-size: 12px; line-height: 16px; white-space: nowrap; color: #d1d5db; background: #3a3633; border: 1px solid transparent; }
.badge.outline { color: #e2e8f0; background: none; border-color: #3a3633; }
.badge.b-green { color: #b9f8cf; background: #0d542b; }
.badge.b-blue { color: #bedbff; background: #1c398e; }

/* Matrix */
.matrix { width: 100%; margin-top: 24px; border-collapse: collapse; table-layout: fixed; }
.col-a { width: 29%; }
.col-b { width: 25.6%; }
.col-c { width: 17%; }
.col-d { width: 28.4%; }
.matrix tr { border-bottom: 1px solid #3a3633; }
.matrix th { padding: 8px; text-align: center; }
.matrix th:first-child { text-align: left; }
.matrix td { padding: 4px; }
.matrix button { display: flex; flex-direction: column; align-items: center; gap: 4px; width: 100%; height: 62px; padding: 12px; font-size: 12px; line-height: 16px; font-weight: 700; border: 1px solid; }
.matrix .emoji { height: 14px; margin-top: 1px; }
.m-green button { background: #032e15; border-color: #7bf1a8; }
.m-blue button { background: #162456; border-color: #8ec5ff; }
.m-yellow button { background: #432004; border-color: #ffdf20; }
.m-red button { background: #460809; border-color: #ffa2a2; }
.key { display: flex; justify-content: center; gap: 24px; margin-top: 16px; font-size: 12px; line-height: 16px; }
.key li { display: flex; align-items: center; gap: 4px; height: 16px; }
.swatch { width: 12px; height: 12px; border-radius: 4px; }
.s-green { background: #dcfce7; }
.s-blue { background: #dbeafe; }
.s-yellow { background: #fef9c2; }
.s-red { background: #ffe2e2; }

/* Insights */
.insights { display: grid; grid-template-columns: repeat(3, 1fr); gap: 16px; margin-top: 24px; }
.insight { padding: 16px; border: 1px solid #3a3633; font-size: 12px; line-height: 16px; }
.insight-head { display: flex; align-items: flex-start; justify-content: space-between; gap: 4px; }
.insight h3 { font-size: 14px; line-height: 20px; }
.insight p { margin: 8px 0 12px; color: #9ca3af; }
.insight a { display: block; height: 16px; color: #05df72; }
.insight a .icon { vertical-align: -2px; }

.status { display: grid; grid-template-columns: repeat(4, 1fr); gap: 16px; margin-top: 24px; }
.status li { display: flex; align-items: center; gap: 8px; }
.check { width: 12px; height: 14px; fill: none; stroke: #9ca3af; }
.summary { display: grid; grid-template-columns: repeat(3, 1fr); gap: 16px; margin-top: 24px; }
.summary p { margin-top: 4px; color: #9ca3af; }
.summary .link-blue { color: #155dfc; }

/* Floating developer badges over the left edge */
.dev-badges { position: absolute; top: 585px; bottom: 20px; left: 20px; display: flex; flex-direction: column; gap: 404px; pointer-events: none; }
.dev-badge { flex: none; width: 36px; height: 36px; background: #0a0a0a; border-radius: 50%; box-shadow: 0 0 0 1px #171717, 0 0 0 2px #454240, 0 16px 32px -8px rgba(0, 0, 0, .24); pointer-events: auto; }
.dev-badge:last-child { margin-top: -20px; }
.dev-badge svg { display: block; }
```
FILE: chart.js
```js
// Each series is a flat list of x, y pairs inside the 828 x 270 plot.
const series = {
  impressions: [0,110,6,112,17,159,28,93,38,143,51,102,63,128,73,97,89,170,102,136,109,126,117,103,128,152,141,83,164,166,176,109,186,117,200,95,211,119,221,104,246,152,266,124,281,134,294,111,310,160,320,102,330,160,341,101,355,118,365,146,375,93,387,149,395,141,400,136,411,95,425,168,431,101,455,166,474,106,485,154,498,97,518,152,534,78,551,166,561,85,576,160,586,118,594,133,605,92,637,174,642,108,649,118,657,92,672,167,683,120,696,88,713,159,723,129,731,142,740,96,751,156,761,112,769,123,776,119,789,147,802,149,814,89],
  reach: [0,36,17,92,27,48,37,96,53,27,64,75,73,43,85,112,95,90,105,79,117,44,127,111,140,28,154,66,164,113,177,30,191,69,202,33,211,49,219,32,234,75,249,85,265,58,280,82,293,41,309,106,320,31,330,115,340,28,349,67,356,49,365,91,375,18,386,95,395,71,401,83,411,50,421,90,430,55,442,99,456,80,467,52,484,88,497,49,508,58,520,92,534,7,549,93,560,33,576,110,586,67,594,77,605,30,616,73,630,114,641,40,650,60,657,48,670,106,683,71,691,55,701,30,714,116,723,77,730,85,740,29,750,88,761,50,769,68,777,55,790,77,802,82,814,19],
  spend: [0,71,12,150,22,121,35,152,58,71,74,120,79,110,92,155,103,72,114,103,129,115,146,75,156,111,164,91,173,143,184,93,192,123,200,105,209,150,220,64,230,145,240,64,252,146,265,60,276,135,284,105,294,140,307,68,322,135,330,104,337,115,346,105,356,148,368,91,375,103,389,60,404,112,418,98,428,73,440,133,451,60,459,86,467,72,485,155,497,103,513,134,522,123,531,116,545,106,556,136,568,63,583,145,589,143,606,83,613,85,627,70,641,120,650,118,666,70,677,146,687,114,696,149,704,120,713,140,724,77,731,88,740,150,750,122,759,141,780,60,786,61,796,76,804,71,814,84],
  clicks: [0,263,16,266,60,265,82,264,95,265,138,263,157,263,170,265,180,264,187,265,197,262,220,264,270,264,325,263,340,266,352,263,362,265,400,263,415,265,455,264,467,266,500,264,512,266,552,262,567,266,578,263,590,265,622,263,632,266,645,264,668,265,700,263,722,263,740,265,760,263,770,265,785,263,798,265,812,263,824,264]
};

function points(flat) {
  const out = [];
  for (let i = 0; i < flat.length; i += 2) out.push([flat[i], flat[i + 1]]);
  return out;
}

// Monotone cubic interpolation keeps peaks and dips at their data points.
function curve(p) {
  const slope = i => (p[i + 1][1] - p[i][1]) / (p[i + 1][0] - p[i][0]);
  const tangent = p.map((_, i) => {
    if (i === 0) return slope(0);
    if (i === p.length - 1) return slope(i - 1);
    const a = slope(i - 1), b = slope(i);
    return a * b <= 0 ? 0 : 2 * a * b / (a + b);
  });
  let d = `M${p[0]}`;
  for (let i = 1; i < p.length; i++) {
    const [x0, y0] = p[i - 1], [x1, y1] = p[i], h = (x1 - x0) / 3;
    d += `C${x0 + h} ${y0 + h * tangent[i - 1]} ${x1 - h} ${y1 - h * tangent[i]} ${x1} ${y1}`;
  }
  return d;
}

const plot = document.getElementById("plot");
function add(attrs) {
  const el = document.createElementNS("http://www.w3.org/2000/svg", "path");
  for (const k in attrs) el.setAttribute(k, attrs[k]);
  plot.append(el);
}

for (const name of ["clicks", "impressions", "reach", "spend"]) {
  const d = curve(points(series[name]));
  if (name !== "clicks") add({ d: `${d}V160H824V270H0z`, fill: `url(#g-${name})` });
  add({ d, class: `line line-${name}` });
}

const badge = document.getElementById("dev-badge");
for (let i = 0; i < 8; i++) document.getElementById("dev-badges").append(badge.content.cloneNode(true));
```
